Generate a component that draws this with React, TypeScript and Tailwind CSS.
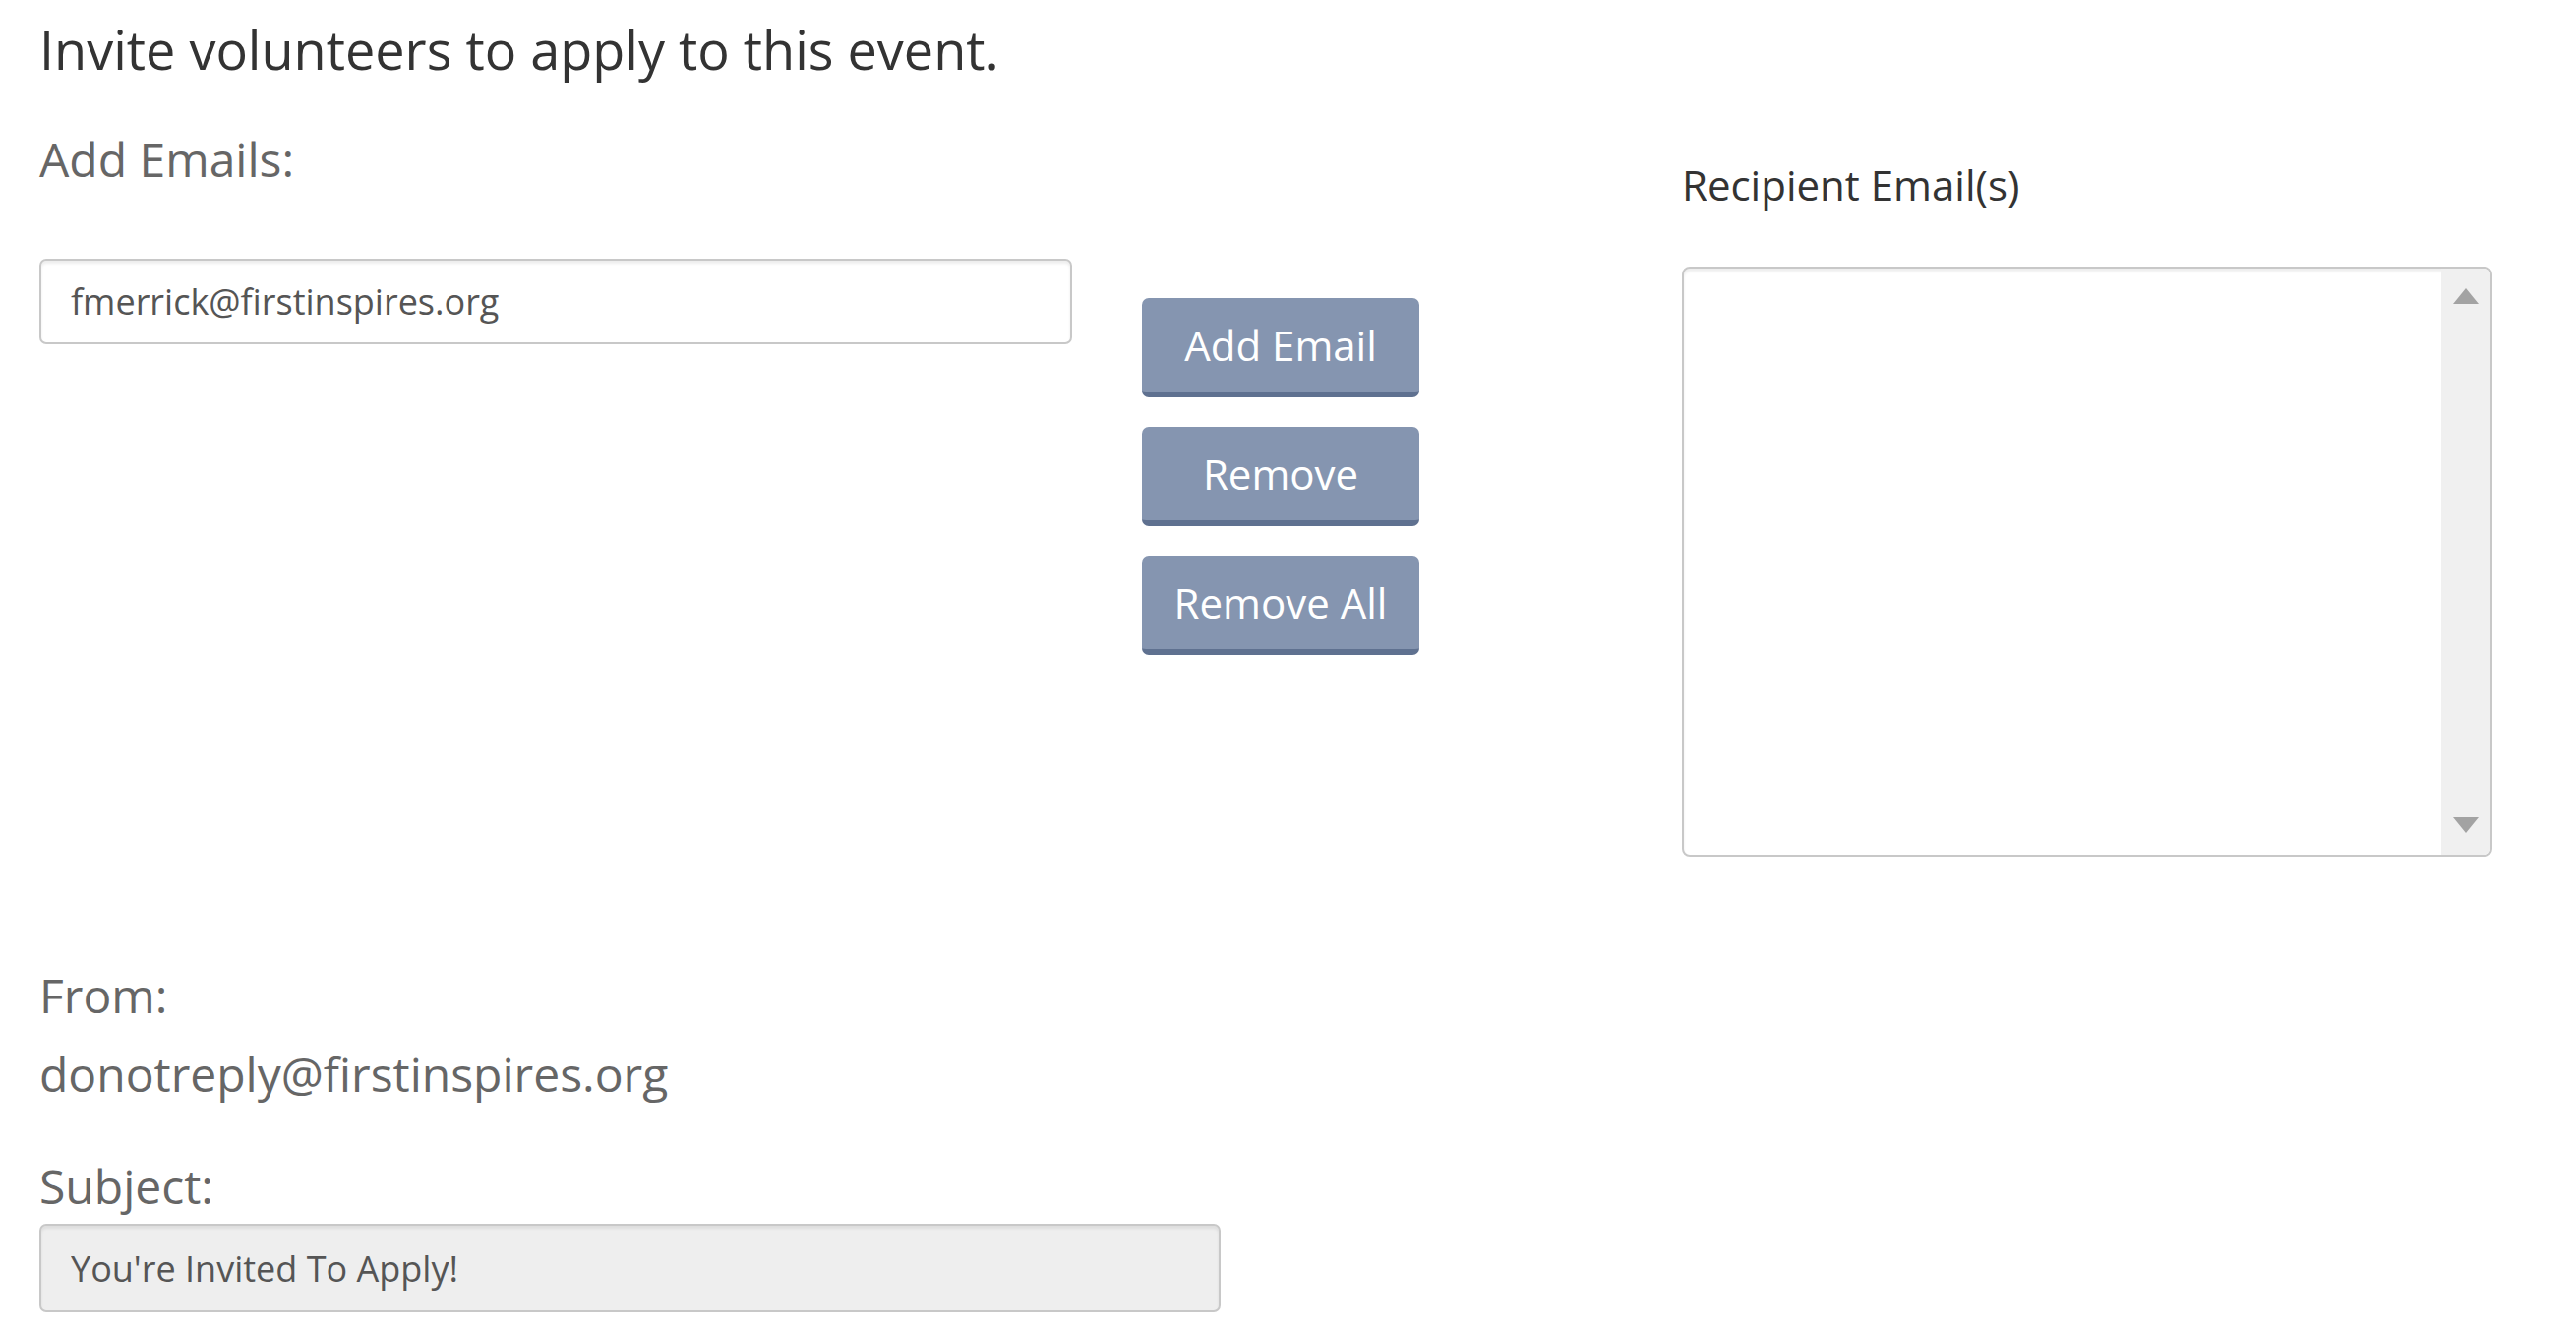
export default function App() {
  const font = { fontFamily: '"Open Sans", "Noto Sans", sans-serif' };

  return (
    <main style={font} className="min-h-screen bg-white pl-[40px] pt-[18px]">
      <h1 className="text-[54px] leading-[65px] font-normal text-[#333333]">
        Invite volunteers to apply to this event.
      </h1>

      <section className="mt-[50px] flex items-start">
        {/* left column */}
        <div className="w-[1050px]">
          <div className="text-[48px] leading-[58px] text-[#666666]">Add Emails:</div>
          <input
            type="text"
            defaultValue="fmerrick@firstinspires.org"
            className="mt-[72px] h-[87px] w-full rounded-[7px] border-2 border-[#c8c8c8] bg-white px-[30px] text-[36px] text-[#555555] shadow-[inset_0_3px_3px_rgba(0,0,0,0.07)] outline-none"
            style={font}
          />
        </div>

        {/* buttons */}
        <div className="ml-[71px] mt-[170px] flex w-[282px] flex-col gap-[30px]">
          {["Add Email", "Remove", "Remove All"].map((label) => (
            <button
              key={label}
              style={font}
              className="h-[101px] w-full rounded-[7px] border-b-[6px] border-[#5f7190] bg-[#8595b0] text-[42px] text-white"
            >
              {label}
            </button>
          ))}
        </div>

        {/* recipients */}
        <div className="ml-[267px] mt-[30px] w-[824px]">
          <div className="text-[42px] leading-[50px] text-[#333333]">Recipient Email(s)</div>
          <div className="mt-[58px] flex h-[600px] overflow-hidden rounded-[8px] border-2 border-[#c8c8c8] bg-white shadow-[inset_0_3px_3px_rgba(0,0,0,0.07)]">
            <div className="flex-1" />
            <div className="flex w-[50px] flex-col items-center justify-between bg-[#f0f0f0] pb-[22px] pt-[20px]">
              <svg width="26" height="16" viewBox="0 0 26 16">
                <polygon points="13,0 26,16 0,16" fill="#a3a3a3" />
              </svg>
              <svg width="26" height="16" viewBox="0 0 26 16">
                <polygon points="0,0 26,0 13,16" fill="#a3a3a3" />
              </svg>
            </div>
          </div>
        </div>
      </section>

      <section className="mt-[112px]">
        <div className="text-[48px] leading-[58px] text-[#666666]">From:</div>
        <div className="mt-[22px] text-[48px] leading-[58px] text-[#666666]">
          donotreply@firstinspires.org
        </div>
        <div className="mt-[56px] text-[48px] leading-[58px] text-[#666666]">Subject:</div>
        <input
          type="text"
          readOnly
          defaultValue="You're Invited To Apply!"
          className="mt-[9px] h-[90px] w-[1201px] rounded-[7px] border-2 border-[#c8c8c8] bg-[#eeeeee] px-[30px] text-[36px] text-[#555555] shadow-[inset_0_3px_3px_rgba(0,0,0,0.07)] outline-none"
          style={font}
        />
      </section>
    </main>
  );
}
